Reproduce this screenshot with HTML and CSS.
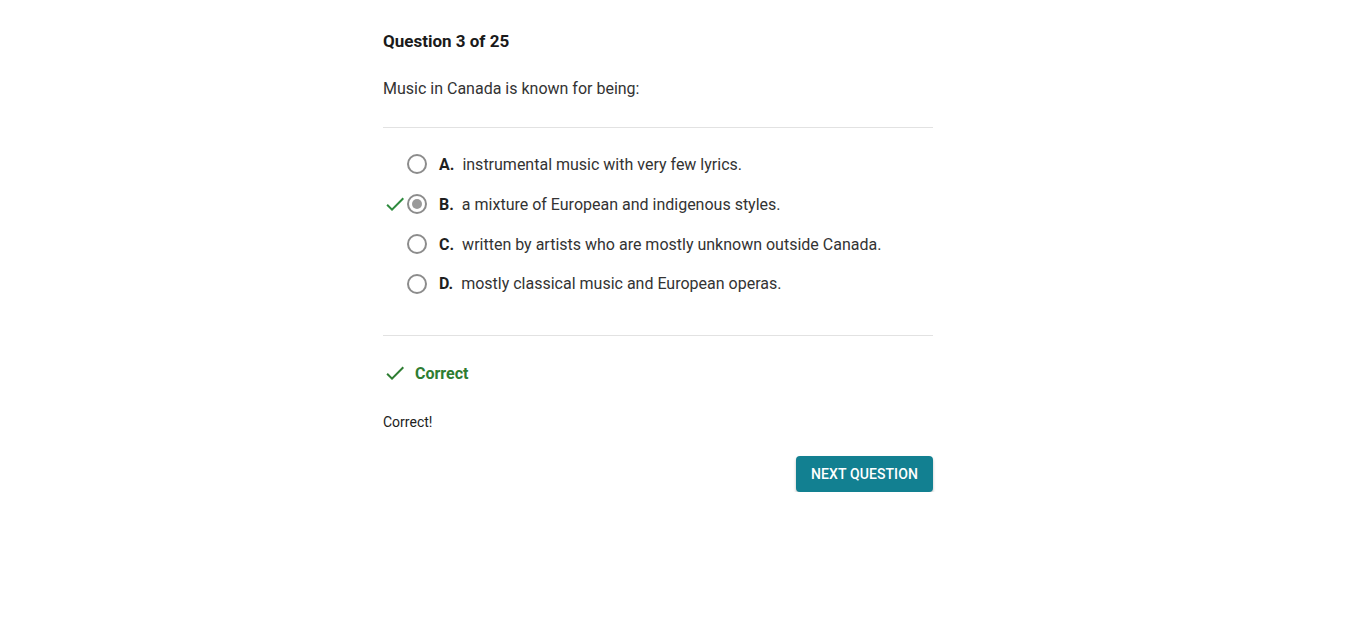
FILE: index.html
```html
<!DOCTYPE html>
<html>
<head>
<meta charset="utf-8">
<link rel="stylesheet" href="styles.css">
</head>
<body>
<main class="quiz">
  <h1 class="title">Question 3 of 25</h1>
  <p class="prompt">Music in Canada is known for being:</p>
  <hr class="divider">
  <ul class="options">
    <li class="option">
      <span class="mark"></span>
      <span class="radio"></span>
      <span class="letter">A.</span>
      <span class="text">instrumental music with very few lyrics.</span>
    </li>
    <li class="option">
      <span class="mark"><svg viewBox="0 0 24 24" width="24" height="24"><path d="M9 16.17L4.83 12l-1.42 1.41L9 19 21 7l-1.41-1.41z"/></svg></span>
      <span class="radio checked"></span>
      <span class="letter">B.</span>
      <span class="text">a mixture of European and indigenous styles.</span>
    </li>
    <li class="option">
      <span class="mark"></span>
      <span class="radio"></span>
      <span class="letter">C.</span>
      <span class="text">written by artists who are mostly unknown outside Canada.</span>
    </li>
    <li class="option">
      <span class="mark"></span>
      <span class="radio"></span>
      <span class="letter">D.</span>
      <span class="text">mostly classical music and European operas.</span>
    </li>
  </ul>
  <hr class="divider lower">
  <div class="result">
    <span class="mark"><svg viewBox="0 0 24 24" width="24" height="24"><path d="M9 16.17L4.83 12l-1.42 1.41L9 19 21 7l-1.41-1.41z"/></svg></span>
    <span class="result-label">Correct</span>
  </div>
  <p class="feedback">Correct!</p>
  <div class="actions">
    <button class="next">Next question</button>
  </div>
</main>
</body>
</html>
```

FILE: styles.css
```css
html, body {
  margin: 0;
  padding: 0;
  background: #ffffff;
}
body {
  font-family: Roboto, "Liberation Sans", Arial, sans-serif;
  color: #212121;
}
.quiz {
  width: 550px;
  margin-left: 383px;
  padding-top: 29px;
}
.title {
  margin: 0;
  font-size: 17px;
  line-height: 24px;
  font-weight: 700;
  color: #1a1a1a;
}
.prompt {
  margin: 24px 0 0;
  font-size: 16px;
  line-height: 24px;
  color: #333333;
}
.divider {
  margin: 26px 0 0;
  border: 0;
  height: 1px;
  background: #e2e2e2;
}
.divider.lower {
  margin-top: 32px;
}
.options {
  list-style: none;
  margin: 16px 0 0;
  padding: 0;
}
.option {
  display: flex;
  align-items: center;
  height: 40px;
  font-size: 16px;
  color: #333333;
}
.option:last-child {
  height: 39px;
}
.mark {
  width: 24px;
  height: 24px;
  flex: none;
  display: flex;
}
.mark svg {
  fill: #2e8b3e;
}
.radio {
  box-sizing: border-box;
  width: 20px;
  height: 20px;
  border: 2px solid #8c8c8c;
  border-radius: 50%;
  flex: none;
  margin-right: 12px;
  display: flex;
  align-items: center;
  justify-content: center;
}
.radio.checked::after {
  content: "";
  width: 10px;
  height: 10px;
  border-radius: 50%;
  background: #9a9a9a;
}
.letter {
  font-weight: 700;
  color: #1f1f1f;
  margin-right: 8px;
}
.result {
  display: flex;
  align-items: center;
  margin-top: 25px;
  height: 24px;
}
.result .mark {
  margin-right: 8px;
}
.result .mark svg {
  fill: #2e7d32;
}
.result-label {
  font-size: 16px;
  font-weight: 700;
  color: #2e7d32;
}
.feedback {
  margin: 27px 0 0;
  font-size: 14px;
  line-height: 20px;
  color: #212121;
}
.actions {
  display: flex;
  justify-content: flex-end;
  margin-top: 24px;
}
.next {
  height: 36px;
  width: 137px;
  border: 0;
  border-radius: 4px;
  background: #128091;
  color: #ffffff;
  font-family: Roboto, "Liberation Sans", Arial, sans-serif;
  font-size: 14px;
  font-weight: 500;
  text-transform: uppercase;
  letter-spacing: 0.1px;
  box-shadow: 0 2px 3px rgba(0,0,0,0.25);
  cursor: pointer;
}
```
